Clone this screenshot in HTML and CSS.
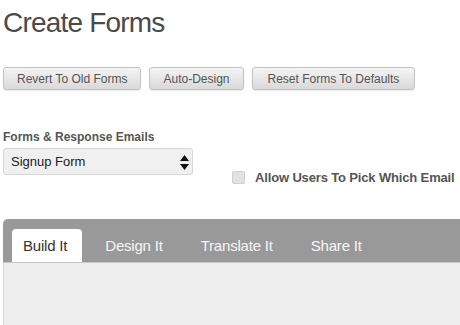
FILE: index.html
```html
<!DOCTYPE html>
<html lang="en">
<head>
    <meta charset="UTF-8">
    <meta name="viewport" content="width=device-width, initial-scale=1.0">
    <title>Create Forms</title>
    <link rel="stylesheet" href="styles.css">
</head>
<body>
    <h1>Create Forms</h1>

    <div class="actions">
        <button>Revert To Old Forms</button>
        <button>Auto-Design</button>
        <button class="wide">Reset Forms To Defaults</button>
    </div>

    <div class="settings">
        <div class="field">
            <label for="form">Forms &amp; Response Emails</label>
            <div class="select-wrap">
                <select id="form">
                    <option>Signup Form</option>
                    <option>Unsubscribe Form</option>
                </select>
                <svg class="arrows" width="9" height="15" viewBox="0 0 9 15">
                    <path d="M4.5 0 L9 6 L0 6 Z" fill="#111"/>
                    <path d="M0 9 L9 9 L4.5 15 Z" fill="#111"/>
                </svg>
            </div>
        </div>
        <label class="check"><input type="checkbox"> Allow Users To Pick Which Email</label>
    </div>

    <div class="tabs">
        <div class="tab active">Build It</div>
        <div class="tab">Design It</div>
        <div class="tab">Translate It</div>
        <div class="tab">Share It</div>
    </div>
    <div class="panel"></div>
</body>
</html>
```

FILE: styles.css
```css
body {
    margin: 0;
    padding: 0 0 0 3px;
    background-color: white;
    color: #555;
    font-family: "Liberation Sans", Arial, sans-serif;
}
h1 {
    margin: 7px 0 0 0;
    font-size: 28px;
    line-height: 32px;
    font-weight: normal;
    letter-spacing: -0.8px;
    color: #4a4a4a;
}
.actions {
    display: flex;
    gap: 8px;
    margin-top: 28px;
}
button {
    height: 23px;
    padding: 0 13px;
    font-family: "Liberation Sans", Arial, sans-serif;
    font-size: 12px;
    color: #555;
    border: 1px solid #c2c2c2;
    border-radius: 3px;
    background: linear-gradient(#f4f4f4, #d9d9d9);
    box-shadow: 0 1px 1px rgba(0, 0, 0, 0.08);
    cursor: pointer;
}
button.wide { padding: 0 15px; }
.settings {
    display: flex;
    margin-top: 40px;
}
.field label {
    display: block;
    font-size: 12px;
    line-height: 15px;
    font-weight: bold;
    color: #555;
}
.select-wrap {
    position: relative;
    width: 190px;
    margin-top: 3px;
}
select {
    appearance: none;
    width: 190px;
    height: 27px;
    padding: 0 0 0 7px;
    font-family: "Liberation Sans", Arial, sans-serif;
    font-size: 13px;
    color: #222;
    background-color: #f0f0f0;
    border: 1px solid #d6d6d6;
    border-radius: 3px;
}
.arrows {
    position: absolute;
    left: 177px;
    top: 7px;
    pointer-events: none;
}
.check {
    display: flex;
    align-items: center;
    gap: 10px;
    margin: 40px 0 0 39px;
    height: 14px;
    font-size: 13px;
    font-weight: bold;
    letter-spacing: -0.15px;
    color: #555;
    white-space: nowrap;
}
.check input {
    appearance: none;
    margin: 0;
    width: 13px;
    height: 13px;
    background-color: #e2e2e2;
    border: 1px solid #cfcfcf;
    border-radius: 2px;
}
.tabs {
    display: flex;
    gap: 12px;
    margin-top: 35px;
    padding: 10px 0 0 9px;
    background-color: #999;
    border-top-left-radius: 5px;
    border-bottom: 1px solid #c6c6c6;
}
.tab {
    height: 33px;
    line-height: 33px;
    padding: 0 15px 0 11px;
    font-size: 15px;
    letter-spacing: -0.2px;
    color: #f6f6f6;
}
.tab.active {
    background-color: white;
    color: #333;
    border-radius: 4px 4px 0 0;
}
.panel {
    height: 70px;
    background-color: #ededed;
    border-left: 1px solid #d8d8d8;
}
```
